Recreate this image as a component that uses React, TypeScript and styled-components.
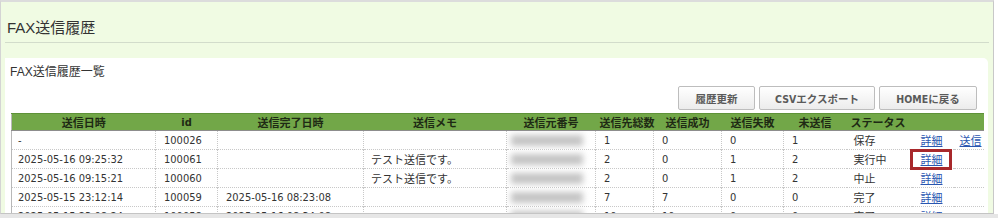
import React from "react";
import styled, { createGlobalStyle } from "styled-components";

const Global = createGlobalStyle`
  html, body { margin: 0; padding: 0; background: #ffffff; }
  body { width: 998px; height: 218px; overflow: hidden; font-family: "DejaVu Sans Condensed", "DejaVu Sans", "Noto Sans CJK JP", sans-serif; color: #333; }
`;

const Frame = styled.div`
  width: 992px;
  height: 211px;
  overflow: hidden;
  background: #f0fbe3;
  border-top: 2px solid #dcdcdc;
  border-left: 1px solid #d4d4d4;
  border-right: 1px solid #c8c8c8;
  border-bottom: 1px solid #c4c4c4;
`;

const BottomBar = styled.div`
  width: 998px;
  height: 5px;
  background: #e6e6e6;
`;

const TitleBar = styled.div`
  margin: 0 4px;
  height: 40px;
  display: flex;
  align-items: flex-end;
  border-bottom: 1px solid #d2dccb;
`;

const Title = styled.h1`
  margin: 0 0 4px 2px;
  font-family: "Liberation Sans", "Noto Sans CJK JP", sans-serif;
  font-size: 15px;
  font-weight: normal;
  line-height: 20px;
  color: #333;
`;

const Panel = styled.div`
  margin: 15px 0 0 4px;
  width: 983px;
  background: #ffffff;
  border-top-right-radius: 5px;
  padding: 6px 4px 0 6px;
  box-sizing: border-box;
`;

const PanelHeading = styled.h2`
  margin: 0 0 0 -1px;
  font-family: "Liberation Sans", "Noto Sans CJK JP", sans-serif;
  font-size: 12px;
  font-weight: normal;
  line-height: 16px;
  color: #333;
`;

const Toolbar = styled.div`
  display: flex;
  justify-content: flex-end;
  gap: 4px;
  margin-top: 6px;
  padding-right: 7px;
`;

const Button = styled.button<{ $w: number }>`
  width: ${(p) => p.$w}px;
  height: 24px;
  border: 1px solid #bdbdbd;
  border-radius: 2px;
  background: linear-gradient(#ffffff, #ececec);
  font-family: "DejaVu Sans Condensed", "DejaVu Sans", "Noto Sans CJK JP", sans-serif;
  font-size: 10.5px;
  font-weight: bold;
  color: #5a5a5a;
  padding: 0;
  cursor: pointer;
`;

const Table = styled.table`
  margin-top: 3px;
  width: 972px;
  border-collapse: collapse;
  table-layout: fixed;
  font-size: 11px;
  border-left: 1px solid #b8b8b8;
`;

const HeadRow = styled.tr`
  background: #72a748;
  border-top: 1px solid #5e9238;
  border-bottom: 1px solid #8d8d8d;
`;

const Th = styled.th<{ $align?: string }>`
  height: 16px;
  padding: 0 4px;
  font-size: 11px;
  font-weight: bold;
  color: #1e2a14;
  text-align: ${(p) => p.$align || "center"};
  white-space: nowrap;
`;

const Row = styled.tr`
  border-bottom: 1px dotted #c8c8c8;
`;

const Td = styled.td<{ $line?: boolean; $pl?: number }>`
  height: 18px;
  padding: 0 7px 0 ${(p) => (p.$pl ?? 7)}px;
  white-space: nowrap;
  overflow: hidden;
  color: #333;
  border-right: ${(p) => (p.$line ? "1px dotted #c8c8c8" : "none")};
  position: relative;
`;

const LinkCell = styled(Td)`
  overflow: visible;
`;

const Blur = styled.span`
  display: inline-block;
  width: 72px;
  height: 11px;
  margin-left: -3px;
  background: #c4c4c4;
  filter: blur(3px);
  vertical-align: middle;
`;

const LinkText = styled.a`
  color: #2a56b0;
  text-decoration: underline;
  font-size: 11px;
  cursor: pointer;
`;

const Highlight = styled.span`
  position: absolute;
  left: -2px;
  top: -1px;
  width: 36px;
  height: 15px;
  border: 3px solid #a8282b;
  pointer-events: none;
`;

type R = {
  date: string;
  id: string;
  done: string;
  memo: string;
  total: string;
  ok: string;
  ng: string;
  un: string;
  status: string;
  send?: boolean;
  mark?: boolean;
};

const rows: R[] = [
  { date: "-", id: "100026", done: "", memo: "", total: "1", ok: "0", ng: "0", un: "1", status: "保存", send: true },
  { date: "2025-05-16 09:25:32", id: "100061", done: "", memo: "テスト送信です。", total: "2", ok: "0", ng: "1", un: "2", status: "実行中", mark: true },
  { date: "2025-05-16 09:15:21", id: "100060", done: "", memo: "テスト送信です。", total: "2", ok: "0", ng: "1", un: "2", status: "中止" },
  { date: "2025-05-15 23:12:14", id: "100059", done: "2025-05-16 08:23:08", memo: "", total: "7", ok: "7", ng: "0", un: "0", status: "完了" },
  { date: "2025-05-15 23:08:24", id: "100058", done: "2025-05-16 08:34:08", memo: "", total: "10", ok: "10", ng: "0", un: "0", status: "完了" },
];

const widths = [144, 62, 146, 143, 89, 58, 68, 62, 63, 65, 42, 30];

export default function App() {
  return (
    <>
      <Global />
      <Frame>
        <TitleBar>
          <Title>FAX送信履歴</Title>
        </TitleBar>
        <Panel>
          <PanelHeading>FAX送信履歴一覧</PanelHeading>
          <Toolbar>
            <Button $w={77}>履歴更新</Button>
            <Button $w={116}>CSVエクスポート</Button>
            <Button $w={98}>HOMEに戻る</Button>
          </Toolbar>
          <Table>
            <colgroup>
              {widths.map((w, i) => (
                <col key={i} style={{ width: w }} />
              ))}
            </colgroup>
            <thead>
              <HeadRow>
                <Th>送信日時</Th>
                <Th>id</Th>
                <Th>送信完了日時</Th>
                <Th>送信メモ</Th>
                <Th>送信元番号</Th>
                <Th>送信先総数</Th>
                <Th>送信成功</Th>
                <Th>送信失敗</Th>
                <Th>未送信</Th>
                <Th $align="left">ステータス</Th>
                <Th />
                <Th />
              </HeadRow>
            </thead>
            <tbody>
              {rows.map((r) => (
                <Row key={r.id}>
                  <Td $line $pl={6}>{r.date}</Td>
                  <Td $line $pl={8}>{r.id}</Td>
                  <Td $line $pl={8}>{r.done}</Td>
                  <Td $line>{r.memo}</Td>
                  <Td $line><Blur /></Td>
                  <Td $line $pl={8}>{r.total}</Td>
                  <Td $line $pl={8}>{r.ok}</Td>
                  <Td $line $pl={8}>{r.ng}</Td>
                  <Td $pl={8}>{r.un}</Td>
                  <Td>{r.status}</Td>
                  <LinkCell $pl={9}>
                    <LinkText>詳細</LinkText>
                    {r.mark && <Highlight />}
                  </LinkCell>
                  <Td $pl={6}>{r.send && <LinkText>送信</LinkText>}</Td>
                </Row>
              ))}
            </tbody>
          </Table>
        </Panel>
      </Frame>
      <BottomBar />
    </>
  );
}
